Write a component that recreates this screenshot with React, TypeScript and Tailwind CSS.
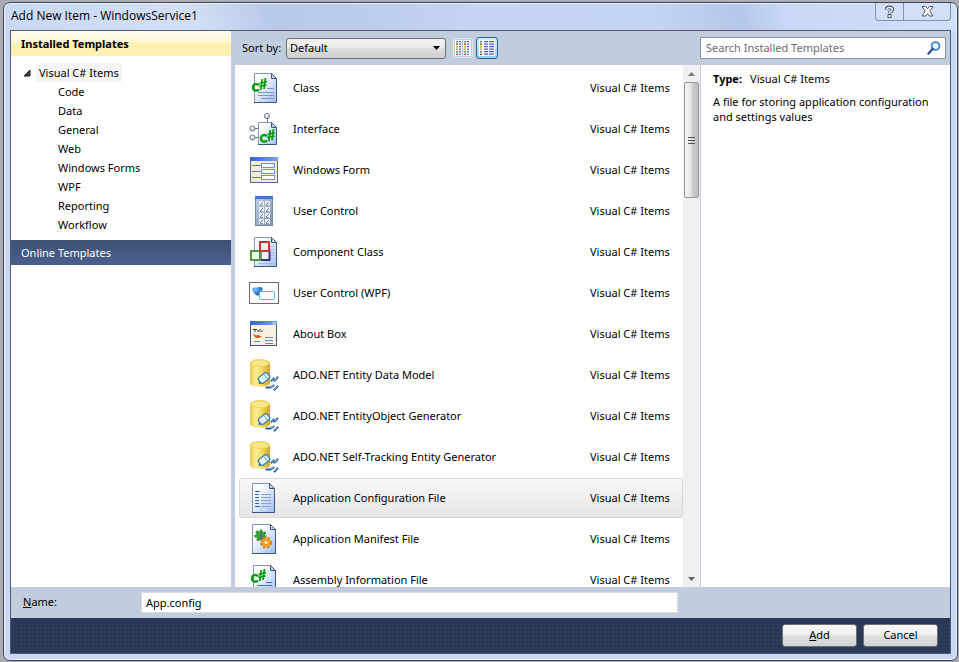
import React, { useState } from 'react';

type IconProps = { children: React.ReactNode };

function Svg({ children }: IconProps) {
  return (
    <svg width="32" height="32" viewBox="0 0 32 32" className="block shrink-0" aria-hidden="true">
      {children}
    </svg>
  );
}

function Defs() {
  return (
    <svg width="0" height="0" className="absolute" aria-hidden="true">
      <defs>
        <linearGradient id="page" x1="0" y1="0" x2="1" y2="1">
          <stop offset="0.25" stopColor="#ffffff" />
          <stop offset="1" stopColor="#9fbdf2" />
        </linearGradient>
        <linearGradient id="titleBlue" x1="0" y1="0" x2="1" y2="0">
          <stop offset="0" stopColor="#2f62cf" />
          <stop offset="1" stopColor="#7aa6f5" />
        </linearGradient>
        <linearGradient id="steel" x1="0" y1="0" x2="1" y2="1">
          <stop offset="0" stopColor="#c3cfe2" />
          <stop offset="1" stopColor="#7f91b2" />
        </linearGradient>
        <linearGradient id="gold" x1="0" y1="0" x2="1" y2="0">
          <stop offset="0" stopColor="#e8c84e" />
          <stop offset="0.3" stopColor="#fbee96" />
          <stop offset="0.6" stopColor="#f3d95f" />
          <stop offset="1" stopColor="#cfa42f" />
        </linearGradient>
        <radialGradient id="ball" cx="0.4" cy="0.35" r="0.7">
          <stop offset="0" stopColor="#ffffff" />
          <stop offset="1" stopColor="#a3b1c6" />
        </radialGradient>
        <radialGradient id="blob" cx="0.3" cy="0.3" r="0.8">
          <stop offset="0" stopColor="#7cc4ff" />
          <stop offset="1" stopColor="#0a4fb4" />
        </radialGradient>
      </defs>
    </svg>
  );
}

function Sheet({ x = 6, y = 1, w = 23, h = 30 }: { x?: number; y?: number; w?: number; h?: number }) {
  const r = x + w - 0.5;
  const b = y + h - 0.5;
  return (
    <g>
      <path
        d={`M${x + 0.5} ${y + 0.5}H${r - 5}L${r} ${y + 5.5}V${b}H${x + 0.5}Z`}
        fill="url(#page)"
        stroke="#8296b6"
      />
      <path d={`M${r} ${y + 5}V${b}H${x}`} fill="none" stroke="#3c5583" />
      <path d={`M${r - 5} ${y + 0.5}V${y + 5.5}H${r}Z`} fill="#c9d6ea" stroke="#3f5478" />
    </g>
  );
}

function CSharp({ x, y }: { x: number; y: number }) {
  return (
    <g fill="none" stroke="#0b9a10" transform={`translate(${x} ${y})`}>
      <path d="M6.800 7.400C5.600 5.400 1 5.400 1 9.300C1 13.200 5.600 13.400 6.900 11.300" strokeWidth="2.400" />
      <path d="M10.300 1L8.800 12M13.500 0L12 11" strokeWidth="1.800" />
      <path d="M7.600 5.200L15 3.700M7.200 8.600L14.600 7.100" strokeWidth="1.500" />
    </g>
  );
}

function ClassIcon() {
  return (
    <Svg>
      <Sheet />
      <path d="M19 16.500H26M10 20.500H26M10 23.500H26M13 26.500H26" stroke="#7f93b8" />
      <CSharp x={4} y={6} />
    </Svg>
  );
}

function InterfaceIcon() {
  return (
    <Svg>
      <path d="M19.500 5V10M7 15.500H11M7 24.500H11" stroke="#5f7290" />
      <Sheet x={10} y={9} w={19} h={23} />
      <circle cx="19" cy="3" r="2.600" fill="url(#ball)" stroke="#71819b" />
      <circle cx="4.500" cy="15.500" r="2.600" fill="url(#ball)" stroke="#71819b" />
      <circle cx="4.500" cy="24.500" r="2.600" fill="url(#ball)" stroke="#71819b" />
      <CSharp x={12} y={16} />
    </Svg>
  );
}

function FormIcon() {
  return (
    <Svg>
      <rect x="2.500" y="3.500" width="27" height="25" fill="#f2ecd6" stroke="#54688f" />
      <rect x="2" y="3" width="28" height="4" fill="url(#titleBlue)" />
      <path d="M4 11.500H13M4 17.500H13M4 23.500H13" stroke="#6c7686" />
      {[9.5, 15.5, 21.5].map((y) => (
        <rect key={y} x="13.500" y={y} width="13" height="4" fill="#fff" stroke="#7393cd" />
      ))}
    </Svg>
  );
}

function UserControlIcon() {
  return (
    <Svg>
      <rect x="7.500" y="1.500" width="17" height="29" fill="url(#steel)" stroke="#7487ab" />
      <rect x="7" y="1" width="18" height="3" fill="#3f74d8" />
      {[6, 12, 18, 24].map((y) => (
        <g key={y}>
          <rect x="11" y={y} width="5" height="5" fill="#eef2f8" />
          <rect x="17" y={y} width="5" height="5" fill="#eef2f8" />
          <path d={`M12 ${y + 4}L15 ${y + 1}M18 ${y + 4}L21 ${y + 1}`} stroke="#6a7a96" />
          <path d={`M12 ${y + 4.5}H15M18 ${y + 4.5}H21`} stroke="#8a97ae" />
        </g>
      ))}
    </Svg>
  );
}

function ComponentIcon() {
  return (
    <Svg>
      <Sheet />
      <path d="M22 10.500H26M22 13.500H26M22 16.500H26M23 19.500H26M23 22.500H26M10 27.500H24" stroke="#a7b8d4" />
      <rect x="12.500" y="15" width="9" height="9" fill="#f2f4fb" stroke="#34367f" strokeWidth="2" />
      <rect x="3" y="15" width="9" height="9" fill="#f2f8ef" stroke="#4c9a3c" strokeWidth="2" />
      <rect x="12" y="6" width="9" height="9" fill="#fbeceb" stroke="#c03a3c" strokeWidth="2" />
    </Svg>
  );
}

function WpfIcon() {
  return (
    <Svg>
      <rect x="1.500" y="5.500" width="29" height="21" fill="#fdfdfd" stroke="#6b6b6b" />
      <path d="M4 12C6 9.500 8 11 9.500 10.500C12 9.500 15 10 14.500 13L12 15V18C9 19.500 6 17.500 4 12Z" fill="url(#blob)" />
      <rect x="11.500" y="14.500" width="15" height="8" rx="1" fill="#fff" stroke="#4db8dc" />
    </Svg>
  );
}

function AboutIcon() {
  return (
    <Svg>
      <rect x="2.500" y="3.500" width="26" height="24" fill="#f6f1e0" stroke="#43557a" />
      <rect x="2" y="3" width="27" height="4" fill="url(#titleBlue)" />
      <path d="M25 4.500L27 6.500M27 4.500L25 6.500" stroke="#fff" />
      <path d="M5 11.500H9M7 11V14M10 12V14M12 11V14M14 12.500V14" stroke="#3a3a3a" />
      <path d="M5 15.500L8 17.500L10 17L14 18.500L11 20L8 20L6 18Z" fill="#dd5b20" />
      <path d="M17 19.500H25M6 23.500H12M17 22.500H25M17 25.500H25" stroke="#6f86bd" />
    </Svg>
  );
}

function DatabaseIcon() {
  return (
    <Svg>
      <path d="M2 4V24C2 29 22 29 22 24V4Z" fill="url(#gold)" />
      <ellipse cx="12" cy="4" rx="10" ry="4" fill="#ecd35c" />
      <ellipse cx="12" cy="4.300" rx="8.500" ry="2.900" fill="#f8e789" />
      <path d="M11 24.500L13.500 22.500" stroke="#1f5f8f" strokeWidth="2" />
      <rect
        x="10.500"
        y="15.500"
        width="11"
        height="7"
        rx="2"
        transform="rotate(-38 16 19)"
        fill="#e3f3fd"
        stroke="#2f78a8"
        strokeWidth="1.200"
      />
      <path d="M16 15.500L19.500 20" stroke="#5aa0cb" />
      <g fill="none" strokeLinecap="round">
        <path d="M23.500 21.500L25.500 19.500M26.500 21.500L29.500 18.500M18.500 28.500H22.500L25.500 26.500M26.500 30.500L29.500 27.500" stroke="#1f5f8f" strokeWidth="2.200" />
        <path d="M23.500 21L25 19.500M26.500 21L29 18.500M23 28L25.500 26M26.500 30L29 27.500" stroke="#bfe2f7" />
      </g>
    </Svg>
  );
}

function ConfigIcon() {
  return (
    <Svg>
      <Sheet x={4} />
      <path d="M7 9.500H12M7 12.500H11M7 15.500H11M7 18.500H11M7 21.500H11M7 24.500H12" stroke="#2a5fc4" />
      <path d="M13 12.500H23M13 15.500H23M13 18.500H23M13 21.500H23M13 24.500H23" stroke="#8aa3d0" />
    </Svg>
  );
}

function ManifestIcon() {
  return (
    <Svg>
      <Sheet x={4} w={24} />
      <circle cx="12.500" cy="12.500" r="4.500" fill="#37a434" stroke="#2b8a2b" strokeWidth="3" strokeDasharray="2.400 1.600" />
      <circle cx="12.500" cy="12.500" r="4.500" fill="#37a434" />
      <circle cx="18" cy="19.500" r="4.500" fill="#e8a02c" stroke="#c97f18" strokeWidth="3" strokeDasharray="2.200 1.500" />
      <circle cx="18" cy="19.500" r="4.500" fill="#ee9f28" />
      <circle cx="18" cy="19.500" r="1.500" fill="#fff3d6" />
      <path d="M12 9.500H14V18L12 16Z" fill="#5b6b7d" />
    </Svg>
  );
}

function AssemblyIcon() {
  return (
    <Svg>
      <Sheet x={5} />
      <path d="M18 18.500H24M9 21.500H24M9 24.500H24" stroke="#3f6fc8" />
      <CSharp x={3} y={5} />
    </Svg>
  );
}

const templates = [
  { name: 'Class', Icon: ClassIcon },
  { name: 'Interface', Icon: InterfaceIcon },
  { name: 'Windows Form', Icon: FormIcon },
  { name: 'User Control', Icon: UserControlIcon },
  { name: 'Component Class', Icon: ComponentIcon },
  { name: 'User Control (WPF)', Icon: WpfIcon },
  { name: 'About Box', Icon: AboutIcon },
  { name: 'ADO.NET Entity Data Model', Icon: DatabaseIcon },
  { name: 'ADO.NET EntityObject Generator', Icon: DatabaseIcon },
  { name: 'ADO.NET Self-Tracking Entity Generator', Icon: DatabaseIcon },
  { name: 'Application Configuration File', Icon: ConfigIcon },
  { name: 'Application Manifest File', Icon: ManifestIcon },
  { name: 'Assembly Information File', Icon: AssemblyIcon },
];

const categories = ['Code', 'Data', 'General', 'Web', 'Windows Forms', 'WPF', 'Reporting', 'Workflow'];

function TitleBar() {
  return (
    <header className="flex h-[27px] shrink-0 items-start justify-between">
      <h1 className="pl-px pt-1 font-['Open_Sans','Noto_Sans',sans-serif] text-[12px] leading-[18px]">
        Add New Item - WindowsService1
      </h1>
      <div className="flex h-[18px] overflow-hidden rounded-b border border-t-0 border-[#8392b0] bg-[#d3dff6]">
        <button type="button" aria-label="Help" className="flex w-7 items-center justify-center border-r border-[#8392b0]">
          <svg width="11" height="13" viewBox="0 0 11 13" aria-hidden="true">
            <path d="M2.500 4.500C2.500 1.500 8.500 1.500 8.500 4.300C8.500 6.300 5.500 6.300 5.500 8.300" fill="none" stroke="#4a5468" strokeWidth="3.400" />
            <path d="M2.800 4.300C2.800 1.800 8.300 1.800 8.300 4.300C8.300 6.300 5.500 6.300 5.500 8" fill="none" stroke="#fff" strokeWidth="1.400" />
            <rect x="4" y="9.500" width="3" height="3" fill="#fff" stroke="#4a5468" />
          </svg>
        </button>
        <button type="button" aria-label="Close" className="flex w-[46px] items-center justify-center">
          <svg width="13" height="11" viewBox="0 0 13 11" aria-hidden="true">
            <path
              d="M1 0.500H4.500L6.500 2.800L8.500 0.500H12L8.700 5.200L12 10H8.500L6.500 7.600L4.500 10H1L4.300 5.200Z"
              fill="#fff"
              stroke="#4a5468"
            />
          </svg>
        </button>
      </div>
    </header>
  );
}

function Sidebar() {
  return (
    <nav className="w-[220px] shrink-0 bg-white" aria-label="Template categories">
      <h2 className="h-[25px] bg-[linear-gradient(#fffcf0_0%,#fff6d0_48%,#fff0b0_50%,#fff0b5_100%)] pl-[10px] text-[11px] font-bold leading-[26px]">
        Installed Templates
      </h2>
      <ul className="pb-[6px] pt-[7px] leading-[19px]">
        <li>
          <div className="flex items-center pl-3">
            <svg width="8" height="8" viewBox="0 0 8 8" className="mr-[5px]" aria-hidden="true">
              <path d="M7 1V7H1Z" fill="#404040" stroke="#202020" />
            </svg>
            <span className="bg-[#f5f5f5] px-[3px]">Visual C# Items</span>
          </div>
          <ul>
            {categories.map((c) => (
              <li key={c} className="pl-[47px]">
                {c}
              </li>
            ))}
          </ul>
        </li>
      </ul>
      <h2 className="bg-[linear-gradient(#3e5277,#4a5f8b)] pl-[10px] leading-[25px] text-white">Online Templates</h2>
    </nav>
  );
}

const rowColors = ['#3f9a4f', '#d8402f', '#9ab02e', '#e0a020', '#2f9a9a', '#d8402f'];

function ViewGlyph({ detailed }: { detailed: boolean }) {
  return (
    <svg width="16" height="16" viewBox="0 0 16 16" aria-hidden="true">
      <rect width="16" height="16" fill="#fff" />
      {rowColors.map((c, i) => {
        const y = 1 + i * 2.5;
        return detailed ? (
          <g key={i}>
            <rect x="1" y={y} width="2" height="1.500" fill={c} />
            <path d={`M5 ${y + 0.7}H9M10 ${y + 0.7}H15`} stroke="#4a5db8" strokeWidth="1.200" />
          </g>
        ) : (
          <g key={i}>
            <rect x="1" y={y} width="2" height="1.500" fill={c} />
            <rect x="9" y={y} width="2" height="1.500" fill={c} />
            <path d={`M4 ${y + 0.7}H6M12 ${y + 0.7}H14`} stroke="#4a5db8" strokeWidth="1.200" />
          </g>
        );
      })}
      {!detailed && <path d="M7.500 0V16" stroke="#aab6cc" />}
    </svg>
  );
}

function Toolbar() {
  return (
    <div className="flex h-[34px] shrink-0 items-center pl-[7px]">
      <label htmlFor="sort" className="w-[44px] whitespace-nowrap">
        Sort by:
      </label>
      <div className="relative w-40">
        <select
          id="sort"
          defaultValue="Default"
          className="block h-[21px] w-full appearance-none rounded-[3px] border border-[#707070] bg-[linear-gradient(#f2f2f2_0%,#ebebeb_49%,#dddddd_50%,#cfcfcf_100%)] pl-[3px] text-[11px] leading-[18px]"
        >
          <option>Default</option>
          <option>Name Ascending</option>
          <option>Name Descending</option>
        </select>
        <svg width="7" height="4" viewBox="0 0 7 4" className="pointer-events-none absolute right-[6px] top-2" aria-hidden="true">
          <path d="M0 0H7L3.500 4Z" fill="#000" />
        </svg>
      </div>
      <button type="button" aria-label="Small icons" className="ml-[7px] flex h-5 w-5 items-center justify-center rounded-[2px] border border-[#dfe6f0]">
        <ViewGlyph detailed={false} />
      </button>
      <button
        type="button"
        aria-label="Medium icons"
        aria-pressed="true"
        className="ml-[3px] flex h-[22px] w-[22px] items-center justify-center rounded-[3px] border border-[#2c628b] bg-[linear-gradient(#d5ecf8,#98d1ef)]"
      >
        <ViewGlyph detailed />
      </button>
    </div>
  );
}

function ScrollBar() {
  return (
    <div className="flex w-[17px] shrink-0 flex-col items-center bg-[#f0f0f0]" aria-hidden="true">
      <div className="flex h-[17px] shrink-0 items-center">
        <svg width="7" height="4" viewBox="0 0 7 4">
          <path d="M0 4L3.500 0L7 4Z" fill="#7b7b7b" />
        </svg>
      </div>
      <div className="flex h-[116px] w-[15px] flex-col items-center justify-center gap-[2px] rounded-[2px] border border-[#979797] bg-[linear-gradient(90deg,#f5f5f5_0%,#e6e6e6_48%,#d2d2d2_52%,#bdbdbd_100%)]">
        <div className="h-px w-[7px] bg-[#505050]" />
        <div className="h-px w-[7px] bg-[#505050]" />
        <div className="h-px w-[7px] bg-[#505050]" />
      </div>
      <div className="flex-1" />
      <div className="flex h-[17px] shrink-0 items-center">
        <svg width="7" height="4" viewBox="0 0 7 4">
          <path d="M0 0L3.500 4L7 0Z" fill="#606060" />
        </svg>
      </div>
    </div>
  );
}

function TemplateList({ selected, onSelect }: { selected: string; onSelect: (n: string) => void }) {
  return (
    <div className="flex min-h-0 flex-1 bg-white">
      <ul className="flex min-w-0 flex-1 flex-col gap-px overflow-hidden pl-1 pt-[3px]">
        {templates.map(({ name, Icon }) => (
          <li key={name} className="shrink-0">
            <button
              type="button"
              onClick={() => onSelect(name)}
              className={
                name === selected
                  ? 'flex h-10 w-full items-center rounded-[2px] border border-[#d9d9d9] bg-[linear-gradient(#f8f8f8,#e5e5e5)] px-2 text-left'
                  : 'flex h-10 w-full items-center border border-transparent px-2 text-left'
              }
            >
              <Icon />
              <span className="ml-[13px] flex-1 truncate">{name}</span>
              <span className="w-[84px] whitespace-nowrap">Visual C# Items</span>
            </button>
          </li>
        ))}
      </ul>
      <ScrollBar />
    </div>
  );
}

function Details() {
  return (
    <aside className="flex w-[250px] shrink-0 flex-col">
      <div className="flex h-[34px] shrink-0 items-center pr-1">
        <div className="flex h-[22px] w-full items-center border border-[#8595b3] bg-white pl-[5px] pr-1">
          <input
            type="search"
            aria-label="Search Installed Templates"
            placeholder="Search Installed Templates"
            className="min-w-0 flex-1 bg-transparent text-[11px] outline-none placeholder:text-[#6d6d6d]"
          />
          <svg width="14" height="14" viewBox="0 0 14 14" aria-hidden="true">
            <circle cx="8.500" cy="5" r="3.900" fill="#eef6fd" stroke="#3c86cf" strokeWidth="1.800" />
            <path d="M5.800 7.800L1.500 12.500" stroke="#2a4f9c" strokeWidth="2.400" strokeLinecap="round" />
          </svg>
        </div>
      </div>
      <div className="flex-1 border-l border-[#c2cde0] bg-white pl-3 pr-2 pt-[6px]">
        <p className="leading-4">
          <b className="mr-2">Type:</b>Visual C# Items
        </p>
        <p className="pt-[7px] leading-[15px]">A file for storing application configuration and settings values</p>
      </div>
    </aside>
  );
}

export default function App() {
  const [selected, setSelected] = useState('Application Configuration File');
  const [fileName, setFileName] = useState('App.config');
  const actionClass =
    'h-[23px] w-[75px] rounded-[3px] border border-[#707070] bg-[linear-gradient(#f8f8f8_0%,#efefef_48%,#dedede_52%,#d2d2d2_100%)]';

  return (
    <div className="h-screen bg-[#a9acb3] pb-px pl-[3px] pr-px pt-[2px] font-['Noto_Sans','Open_Sans',sans-serif] text-[11px] text-black">
      <Defs />
      <div className="flex h-full flex-col rounded-[7px] border border-[#3d4556] bg-[#c9d8f6] bg-[linear-gradient(80deg,#c9d8f4_0%,#d3dff6_20%,#b9cae9_28%,#bccceb_38%,#c6d5f4_50%,#c4d4f3_68%,#b5c7ea_77%,#c9d8f6_82%,#d2dff8_100%)] bg-[length:100%_28px] bg-no-repeat px-[6px] pb-[6px] shadow-[inset_0_0_0_1px_#e9f1fd]">
        <TitleBar />
        <main className="flex min-h-0 flex-1 flex-col border border-[#525c70] bg-[#c1ccdd]">
          <div className="flex min-h-0 flex-1">
            <Sidebar />
            <section className="ml-1 flex min-w-0 flex-1 flex-col">
              <Toolbar />
              <TemplateList selected={selected} onSelect={setSelected} />
            </section>
            <Details />
          </div>
          <div className="flex h-[31px] shrink-0 items-center pl-3">
            <label htmlFor="file-name" className="w-[118px]">
              <u>N</u>ame:
            </label>
            <input
              id="file-name"
              value={fileName}
              onChange={(e) => setFileName(e.target.value)}
              className="mr-[272px] h-[21px] min-w-0 flex-1 border border-[#d5dce8] bg-white pl-1 text-[11px] outline-none"
            />
          </div>
          <footer className="flex h-[35px] shrink-0 items-center justify-end gap-[6px] bg-[#293955] bg-[radial-gradient(#2e3f5e_1px,transparent_1px)] bg-[length:4px_4px] pr-3">
            <button type="button" className={actionClass}>
              <u>A</u>dd
            </button>
            <button type="button" className={actionClass}>
              Cancel
            </button>
          </footer>
        </main>
      </div>
    </div>
  );
}
